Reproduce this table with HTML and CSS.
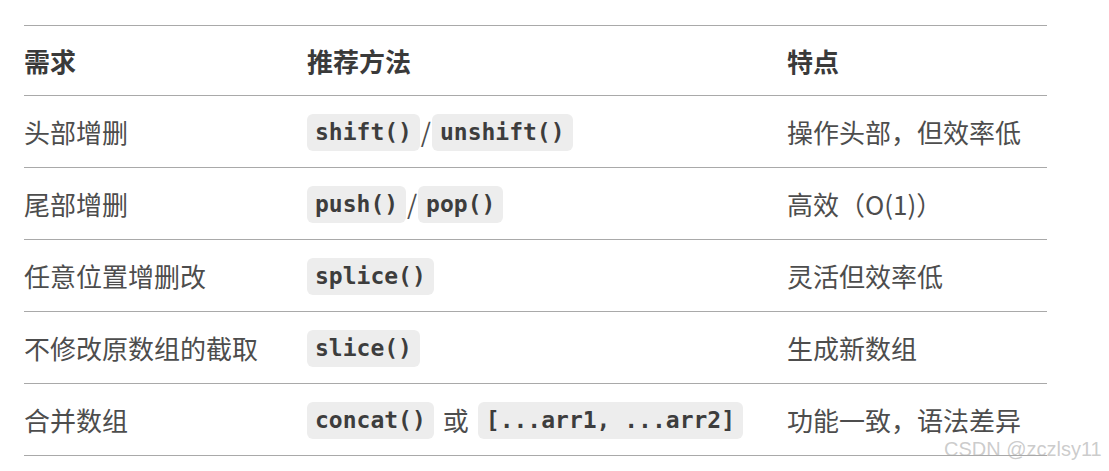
FILE: index.html
```html
<!DOCTYPE html>
<html lang="zh-CN">
<head>
<meta charset="utf-8">
<title>数组方法对比</title>
<link rel="stylesheet" href="styles.css">
</head>
<body>
<div class="page">
  <table class="methods">
    <colgroup>
      <col class="c1"><col class="c2"><col class="c3">
    </colgroup>
    <thead>
      <tr><th>需求</th><th>推荐方法</th><th>特点</th></tr>
    </thead>
    <tbody>
      <tr><td>头部增删</td><td><code class="code">shift()</code><span class="sep">/</span><code class="code">unshift()</code></td><td>操作头部，但效率低</td></tr>
      <tr><td>尾部增删</td><td><code class="code">push()</code><span class="sep">/</span><code class="code">pop()</code></td><td>高效（O(1)）</td></tr>
      <tr><td>任意位置增删改</td><td><code class="code">splice()</code></td><td>灵活但效率低</td></tr>
      <tr><td>不修改原数组的截取</td><td><code class="code">slice()</code></td><td>生成新数组</td></tr>
      <tr><td>合并数组</td><td><code class="code">concat()</code><span class="or">或</span><code class="code">[...arr1, ...arr2]</code></td><td>功能一致，语法差异</td></tr>
    </tbody>
  </table>
  <div class="watermark">CSDN @zczlsy11</div>
</div>
</body>
</html>
```

FILE: styles.css
```css
html, body {
  margin: 0;
  padding: 0;
  background: #ffffff;
}

.page {
  position: relative;
  width: 1109px;
  height: 471px;
  padding: 25px 24px 0 24px;
  box-sizing: border-box;
  font-family: "Noto Sans CJK SC", "Noto Sans", sans-serif;
  color: #4d4d4d;
}

.methods {
  width: 1023px;
  border-collapse: collapse;
  table-layout: fixed;
  font-size: 26px;
}

.c1 { width: 283px; }
.c2 { width: 480px; }
.c3 { width: 260px; }

.methods th,
.methods td {
  padding: 0;
  text-align: left;
  vertical-align: middle;
  border-top: 1px solid #a9a9a9;
  border-bottom: 1px solid #a9a9a9;
  white-space: nowrap;
}

.methods th {
  height: 69px;
  font-weight: 700;
  color: #3a3a3a;
}

.methods td {
  height: 71px;
}

.code {
  display: inline-block;
  vertical-align: middle;
  font-family: "DejaVu Sans Mono", "Liberation Mono", monospace;
  font-weight: 700;
  font-size: 23px;
  line-height: 27px;
  padding: 5px 8px;
  border-radius: 6px;
  background: #ededed;
  color: #3d3d3d;
  position: relative;
  top: -1px;
}

.sep {
  display: inline-block;
  vertical-align: middle;
  width: 12px;
  line-height: 27px;
  text-align: center;
  position: relative;
  top: -3px;
}

.or {
  display: inline-block;
  vertical-align: middle;
  line-height: 27px;
  margin: 0 9px;
  position: relative;
  top: -2px;
}

.watermark {
  position: absolute;
  left: 944px;
  top: 438px;
  font-family: "Liberation Sans", Arial, sans-serif;
  font-size: 20px;
  line-height: 22px;
  color: rgba(170, 170, 170, 0.6);
  white-space: nowrap;
}
```
